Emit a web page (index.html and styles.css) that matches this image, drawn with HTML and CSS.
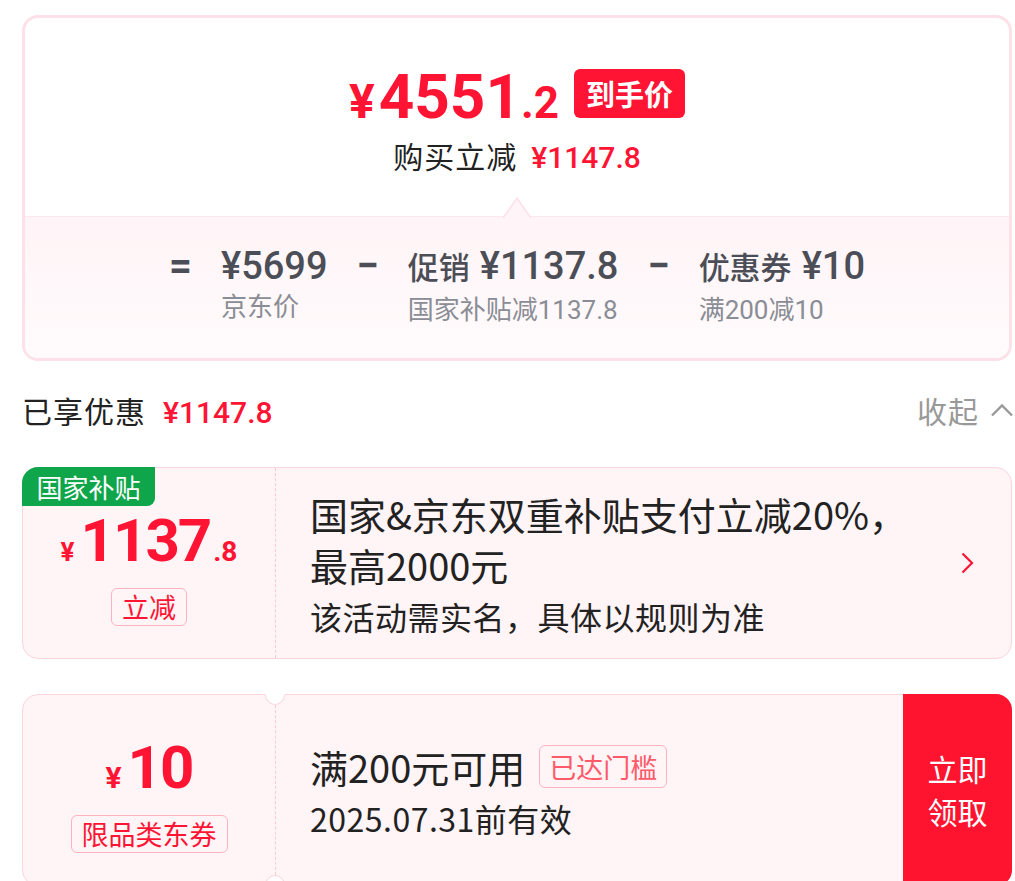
FILE: index.html
```html
<!DOCTYPE html>
<html lang="zh-CN">
<head>
  <meta charset="UTF-8" />
  <meta name="viewport" content="width=device-width, initial-scale=1.0" />
  <title>到手价明细</title>
  <link rel="stylesheet" href="styles.css">
</head>
<body>
  <div class="page">
    <div class="price-card">
      <div class="price-top">
        <div class="price-row">
          <div class="final-price"><span class="yen">¥</span>4551<span class="decimal">.2</span></div>
          <span class="final-tag">到手价</span>
        </div>
        <div class="saved">购买立减<span class="saved-amount">¥1147.8</span></div>
      </div>
      <div class="breakdown">
        <svg class="notch" width="28" height="21" viewBox="0 0 28 21">
          <polygon points="0,21 14,1 28,21" fill="#fff4f7" />
          <polyline points="0,21 14,1 28,21" fill="none" stroke="#fde0e8" stroke-width="1.5" />
        </svg>
        <span class="op">=</span>
        <div class="item">
          <div class="item-main"><span class="amount">¥5699</span></div>
          <div class="item-sub">京东价</div>
        </div>
        <span class="op">−</span>
        <div class="item">
          <div class="item-main">促销<span class="amount">¥1137.8</span></div>
          <div class="item-sub">国家补贴减1137.8</div>
        </div>
        <span class="op">−</span>
        <div class="item">
          <div class="item-main">优惠券<span class="amount">¥10</span></div>
          <div class="item-sub">满200减10</div>
        </div>
      </div>
    </div>

    <div class="discount-head">
      <div class="discount-title">已享优惠<span class="discount-total">¥1147.8</span></div>
      <div class="collapse">
        收起
        <svg width="22" height="14" viewBox="0 0 22 14">
          <polyline points="1,12.5 11,2.5 21,12.5" fill="none" stroke="#9a9a9a" stroke-width="2.4" />
        </svg>
      </div>
    </div>

    <div class="coupon">
      <span class="coupon-label">国家补贴</span>
      <div class="coupon-left">
        <div class="coupon-value"><span class="yen">¥</span>1137<span class="decimal">.8</span></div>
        <span class="coupon-tag">立减</span>
      </div>
      <div class="coupon-body">
        <div class="coupon-text">
          <div class="coupon-title">国家&amp;京东双重补贴支付立减20%，<br>最高2000元</div>
          <div class="coupon-desc">该活动需实名，具体以规则为准</div>
        </div>
        <svg class="arrow" width="13" height="22" viewBox="0 0 13 22">
          <polyline points="1.5,1.5 11,11 1.5,20.5" fill="none" stroke="#ff1434" stroke-width="2.2" />
        </svg>
      </div>
    </div>

    <div class="coupon ticket">
      <div class="coupon-left">
        <div class="coupon-value"><span class="yen">¥</span>10</div>
        <span class="coupon-tag">限品类东券</span>
      </div>
      <div class="coupon-body">
        <div class="coupon-text">
          <div class="coupon-title">满200元可用<span class="reached">已达门槛</span></div>
          <div class="coupon-desc">2025.07.31前有效</div>
        </div>
      </div>
      <button class="take">立即<br>领取</button>
    </div>
  </div>
</body>
</html>
```

FILE: styles.css
```css
* {
  box-sizing: border-box;
}
body {
  margin: 0;
  background: #fff;
  color: #222;
  font-family: Roboto, "Noto Sans CJK SC", sans-serif;
}
.page {
  width: 990px;
  margin-left: 22px;
  padding-top: 15px;
}

/* 到手价卡片 */
.price-card {
  border: 3px solid #fde0e8;
  border-radius: 16px;
  overflow: hidden;
}
.price-top {
  display: flex;
  flex-direction: column;
  align-items: center;
  padding: 47px 0 38px;
}
.price-row {
  display: flex;
  align-items: flex-start;
  gap: 15px;
}
.final-price {
  color: #ff1434;
  font-weight: 700;
  font-size: 62px;
  line-height: 64px;
}
.final-price .yen {
  font-size: 48px;
  line-height: 1;
  margin-right: 4px;
}
.final-price .decimal {
  font-size: 44px;
  line-height: 1;
}
.final-tag {
  margin-top: 4px;
  height: 49px;
  padding: 0 12px;
  background: #ff1434;
  color: #fff;
  border-radius: 6px;
  font-family: "Noto Sans CJK SC", sans-serif;
  font-size: 29px;
  font-weight: 700;
  line-height: 49px;
}
.saved {
  margin-top: 6px;
  font-family: "Noto Sans CJK SC", sans-serif;
  font-size: 30px;
  letter-spacing: 1px;
  line-height: 40px;
}
.saved-amount {
  margin-left: 14px;
  font-family: Roboto, sans-serif;
  font-weight: 500;
  letter-spacing: 0;
  color: #ff1434;
}

.breakdown {
  position: relative;
  display: flex;
  justify-content: center;
  align-items: flex-start;
  gap: 29px;
  padding: 27px 0 31px;
  border-top: 1px solid #fde6ec;
  background: linear-gradient(#fff4f7, #fffbfc);
  color: #4b4e56;
}
.notch {
  position: absolute;
  top: -20px;
  left: 50%;
  margin-left: -14px;
}
.op {
  font-size: 40px;
  font-weight: 700;
  line-height: 44px;
}
.item-main {
  display: flex;
  align-items: baseline;
  gap: 10px;
  font-size: 31px;
  font-weight: 500;
  line-height: 44px;
}
.amount {
  font-size: 38px;
  font-weight: 500;
}
.item-sub {
  margin-top: 2px;
  font-size: 26px;
  line-height: 34px;
  color: #8a8d95;
}

/* 已享优惠 */
.discount-head {
  height: 106px;
  padding-bottom: 8px;
  display: flex;
  align-items: center;
  justify-content: space-between;
}
.discount-title {
  display: flex;
  align-items: baseline;
  font-family: "Noto Sans CJK SC", sans-serif;
  font-size: 30px;
  letter-spacing: 1px;
}
.discount-total {
  margin-left: 17px;
  font-family: Roboto, sans-serif;
  font-weight: 500;
  letter-spacing: 0;
  color: #ff1434;
}
.collapse {
  display: flex;
  align-items: center;
  gap: 12px;
  margin-right: -1px;
  font-family: "Noto Sans CJK SC", sans-serif;
  font-size: 30px;
  letter-spacing: 1px;
  color: #999;
}

/* 优惠券 */
.coupon {
  position: relative;
  display: flex;
  height: 192px;
  background: #fff4f6;
  border: 1px solid #fbd6df;
  border-radius: 16px;
}
.coupon + .coupon {
  margin-top: 35px;
}
.coupon-label {
  position: absolute;
  top: -1px;
  left: -1px;
  width: 133px;
  height: 39px;
  background: #0fa64b;
  color: #fff;
  border-radius: 16px 0 8px 0;
  text-align: center;
  font-family: "Noto Sans CJK SC", sans-serif;
  font-size: 26px;
  line-height: 39px;
}
.coupon-left {
  position: relative;
  width: 253px;
  display: flex;
  flex-direction: column;
  align-items: center;
  justify-content: center;
  padding-top: 8px;
  border-right: 1px dashed #fbc9d4;
}
.coupon-value {
  color: #ff1434;
  font-weight: 700;
  font-size: 60px;
  line-height: 64px;
  letter-spacing: -2px;
}
.coupon-value .yen {
  font-size: 26px;
  line-height: 1;
  letter-spacing: 0;
  margin-right: 6px;
}
.ticket .coupon-value .yen {
  font-size: 30px;
}
.coupon-value .decimal {
  font-size: 28px;
  line-height: 1;
  letter-spacing: 0;
  margin-left: 3px;
}
.coupon-tag {
  margin-top: 15px;
  height: 38px;
  padding: 0 10px;
  border: 1px solid #ffb2c1;
  border-radius: 6px;
  color: #ff1434;
  font-family: "Noto Sans CJK SC", sans-serif;
  font-size: 27px;
  line-height: 36px;
}
.coupon-body {
  flex: 1;
  display: flex;
  align-items: center;
  padding: 0 37px 0 34px;
}
.coupon-text {
  flex: 1;
}
.coupon-title {
  font-family: "Noto Sans CJK SC", sans-serif;
  font-size: 38px;
  line-height: 51px;
}
.ticket .coupon-title {
  display: flex;
  align-items: center;
  gap: 14px;
}
.coupon-desc {
  margin-top: 4px;
  font-family: "Noto Sans CJK SC", sans-serif;
  font-size: 32px;
  letter-spacing: 0.5px;
  line-height: 44px;
}
.reached {
  height: 43px;
  padding: 0 9px;
  border: 1px solid #ffb3c0;
  border-radius: 6px;
  color: #ff5a6a;
  font-size: 27px;
  line-height: 41px;
}
.arrow {
  display: block;
}

/* 券的缺口 */
.ticket .coupon-left::before,
.ticket .coupon-left::after {
  content: "";
  position: absolute;
  right: -10px;
  width: 18px;
  height: 18px;
  border-radius: 50%;
  background: #fff;
  border: 1px solid;
  border-color: transparent #fbd6df #fbd6df transparent;
}
.ticket .coupon-left::before {
  top: -10px;
  transform: rotate(45deg);
}
.ticket .coupon-left::after {
  bottom: -10px;
  transform: rotate(-135deg);
}

.take {
  width: 109px;
  margin: -1px -1px -1px 0;
  padding: 0;
  border: none;
  border-radius: 0 16px 16px 0;
  background: #ff1430;
  color: #fff;
  font-family: "Noto Sans CJK SC", sans-serif;
  font-size: 30px;
  line-height: 43px;
}
```
